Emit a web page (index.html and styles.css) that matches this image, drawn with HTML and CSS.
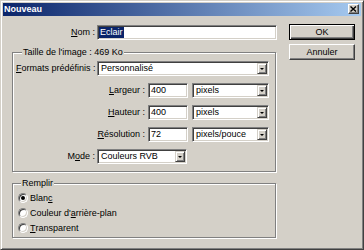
FILE: index.html
```html
<!DOCTYPE html>
<html lang="fr">
<head>
    <meta charset="UTF-8">
    <meta name="viewport" content="width=device-width, initial-scale=1.0">
    <title>Nouveau</title>
    <link rel="stylesheet" href="styles.css">
</head>
<body>
    <div class="window">
        <div class="titlebar">
            <span class="title">Nouveau</span>
            <span class="close">
                <svg width="7" height="6" viewBox="0 0 7 6">
                    <path d="M0.5 0.5 L6 5.5 M6 0.5 L0.5 5.5" stroke="#000" stroke-width="1.4"/>
                </svg>
            </span>
        </div>

        <div class="content">
            <div class="main">
                <div class="row">
                    <span class="lbl lbl-name"><u>N</u>om :</span>
                    <div class="field name-field"><span class="sel">Eclair</span></div>
                </div>

                <div class="group size-group">
                    <span class="caption">Taille de l'image : 469 Ko</span>
                    <div class="rows">
                        <div class="row">
                            <span class="lbl lbl-wide"><u>F</u>ormats prédéfinis :</span>
                            <div class="combo preset"><span class="val">Personnalisé</span><span class="arrow"></span></div>
                        </div>
                        <div class="row">
                            <span class="lbl lbl-dim"><u>L</u>argeur :</span>
                            <div class="field num"><span class="val">400</span></div>
                            <div class="combo unit"><span class="val">pixels</span><span class="arrow"></span></div>
                        </div>
                        <div class="row">
                            <span class="lbl lbl-dim"><u>H</u>auteur :</span>
                            <div class="field num"><span class="val">400</span></div>
                            <div class="combo unit"><span class="val">pixels</span><span class="arrow"></span></div>
                        </div>
                        <div class="row">
                            <span class="lbl lbl-dim"><u>R</u>ésolution :</span>
                            <div class="field num"><span class="val">72</span></div>
                            <div class="combo unit"><span class="val">pixels/pouce</span><span class="arrow"></span></div>
                        </div>
                        <div class="row">
                            <span class="lbl lbl-wide">M<u>o</u>de :</span>
                            <div class="combo mode"><span class="val">Couleurs RVB</span><span class="arrow"></span></div>
                        </div>
                    </div>
                </div>

                <div class="group fill-group">
                    <span class="caption">Remplir</span>
                    <div class="radio-row"><span class="radio checked"></span>Blan<u>c</u></div>
                    <div class="radio-row"><span class="radio"></span>Couleur d'<u>a</u>rrière-plan</div>
                    <div class="radio-row"><span class="radio"></span><u>T</u>ransparent</div>
                </div>
            </div>

            <div class="buttons">
                <button class="btn default">OK</button>
                <button class="btn">Annuler</button>
            </div>
        </div>
    </div>
</body>
</html>
```

FILE: styles.css
```css
* {
    box-sizing: border-box;
}

body {
    margin: 0;
    background: #d4d0c8;
    font-family: 'Liberation Sans', Arial, sans-serif;
    font-size: 9px;
    color: #000;
}

u {
    text-decoration: underline;
    text-underline-offset: 1px;
}

.window {
    width: 364px;
    height: 250px;
    display: flex;
    flex-direction: column;
    background: #d4d0c8;
    border: 1px solid;
    border-color: #d4d0c8 #404040 #404040 #d4d0c8;
    box-shadow: inset 1px 1px 0 #fff, inset -1px -1px 0 #808080;
    padding: 2px;
}

/* title bar */
.titlebar {
    height: 13px;
    display: flex;
    align-items: flex-start;
    padding: 0 2px 0 1px;
    background: linear-gradient(to right, #0a246a, #a6caf0);
}

.title {
    color: #fff;
    font-weight: bold;
    line-height: 12px;
}

.close {
    margin-left: auto;
    margin-top: 1px;
    width: 11px;
    height: 10px;
    display: flex;
    align-items: center;
    justify-content: center;
    background: #d4d0c8;
    border: 1px solid;
    border-color: #fff #404040 #404040 #fff;
    box-shadow: inset -1px -1px 0 #808080;
}

.close svg {
    display: block;
}

/* body */
.content {
    display: flex;
    padding: 8px 6px 0 9px;
}

.main {
    width: 265px;
    padding-top: 1px;
}

.row {
    display: flex;
    align-items: center;
    height: 15px;
}

.lbl {
    text-align: right;
    white-space: nowrap;
    line-height: 15px;
}

.lbl-name {
    width: 83px;
    margin-right: 2px;
}

.lbl-wide {
    width: 79px;
    margin-right: 2px;
}

.lbl-dim {
    width: 129px;
    margin-right: 3px;
}

/* sunken fields */
.field,
.combo {
    height: 15px;
    display: flex;
    align-items: center;
    background: #fff;
    border: 1px solid;
    border-color: #808080 #fff #fff #808080;
    box-shadow: inset 1px 1px 0 #404040, inset -1px -1px 0 #d4d0c8;
    padding: 1px;
    line-height: 11px;
    white-space: nowrap;
    overflow: hidden;
}

.name-field {
    width: 180px;
}

.sel {
    background: #0a246a;
    color: #fff;
    padding: 0 1px;
    line-height: 11px;
}

.num {
    width: 40px;
    margin-right: 4px;
}

.val {
    flex: 1;
    padding-left: 1px;
}

.combo .val {
    padding-left: 2px;
}

.preset {
    width: 172px;
}

.unit {
    width: 77px;
}

.mode {
    width: 90px;
}

.arrow {
    width: 10px;
    height: 11px;
    display: flex;
    align-items: center;
    justify-content: center;
    background: #d4d0c8;
    border: 1px solid;
    border-color: #d4d0c8 #404040 #404040 #d4d0c8;
    box-shadow: inset 1px 1px 0 #fff, inset -1px -1px 0 #808080;
}

.arrow::after {
    content: '';
    border-left: 2px solid transparent;
    border-right: 2px solid transparent;
    border-top: 2px solid #000;
    margin-top: 1px;
}

/* etched groups */
.group {
    position: relative;
    width: 264px;
    border: 1px solid #808080;
    box-shadow: inset 1px 1px 0 #fff, 1px 1px 0 #fff;
}

.caption {
    position: absolute;
    top: -6px;
    padding: 0 1px;
    background: #d4d0c8;
    line-height: 11px;
    white-space: nowrap;
}

.size-group {
    margin-top: 12px;
    padding: 8px 3px 7px 3px;
}

.size-group .caption {
    left: 9px;
}

.rows {
    display: flex;
    flex-direction: column;
    gap: 7px;
}

.fill-group {
    margin-top: 11px;
    padding: 6px 5px 2px 5px;
}

.fill-group .caption {
    left: 8px;
}

.radio-row {
    display: flex;
    align-items: center;
    height: 15px;
    white-space: nowrap;
}

.radio {
    width: 10px;
    height: 10px;
    margin-right: 2px;
    border-radius: 50%;
    background: #fff;
    border: 1px solid;
    border-color: #808080 #fff #fff #808080;
    box-shadow: inset 1px 1px 0 #404040, inset -1px -1px 0 #d4d0c8;
    display: flex;
    align-items: center;
    justify-content: center;
}

.radio.checked::after {
    content: '';
    width: 4px;
    height: 4px;
    border-radius: 50%;
    background: #000;
}

/* push buttons */
.buttons {
    margin-left: 12px;
    width: 66px;
    display: flex;
    flex-direction: column;
    gap: 4px;
}

.btn {
    width: 66px;
    height: 16px;
    padding: 0;
    font-family: inherit;
    font-size: 9px;
    color: #000;
    background: #d4d0c8;
    border: 1px solid;
    border-color: #fff #404040 #404040 #fff;
    box-shadow: inset -1px -1px 0 #808080;
}

.btn.default {
    border-color: #000;
    box-shadow: inset 1px 1px 0 #fff, inset -1px -1px 0 #404040, inset -2px -2px 0 #808080;
}
```
